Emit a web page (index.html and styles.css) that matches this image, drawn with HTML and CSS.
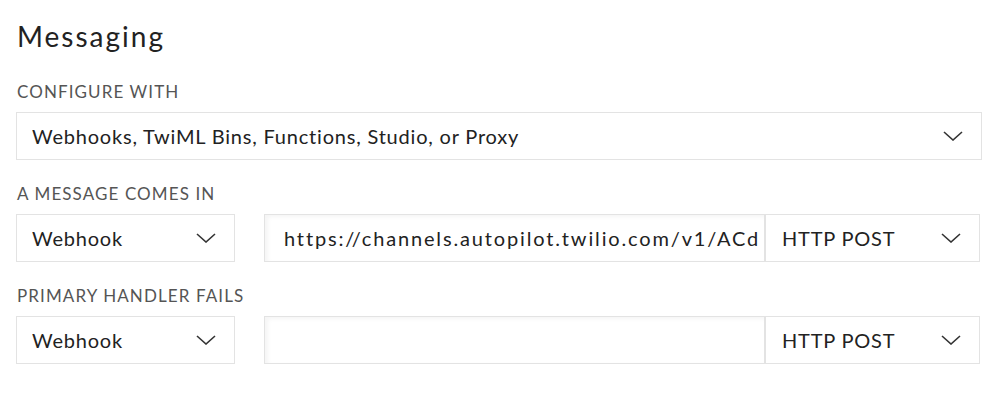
FILE: index.html
```html
<!DOCTYPE html>
<html>
<head>
<meta charset="utf-8">
<link rel="stylesheet" href="styles.css">
</head>
<body>
<div class="page">
  <h1 class="title">Messaging</h1>

  <div class="label">CONFIGURE WITH</div>
  <div class="select full">
    <span class="value">Webhooks, TwiML Bins, Functions, Studio, or Proxy</span>
    <svg class="chev" viewBox="0 0 20 10" width="20" height="10"><path d="M1 1 L10 9 L19 1" fill="none" stroke="#333" stroke-width="1.6"/></svg>
  </div>

  <div class="label">A MESSAGE COMES IN</div>
  <div class="row">
    <div class="select type">
      <span class="value">Webhook</span>
      <svg class="chev" viewBox="0 0 20 10" width="20" height="10"><path d="M1 1 L10 9 L19 1" fill="none" stroke="#333" stroke-width="1.6"/></svg>
    </div>
    <div class="input"><span class="value url">https://channels.autopilot.twilio.com/v1/ACd</span></div>
    <div class="select method">
      <span class="value">HTTP POST</span>
      <svg class="chev" viewBox="0 0 20 10" width="20" height="10"><path d="M1 1 L10 9 L19 1" fill="none" stroke="#333" stroke-width="1.6"/></svg>
    </div>
  </div>

  <div class="label">PRIMARY HANDLER FAILS</div>
  <div class="row">
    <div class="select type">
      <span class="value">Webhook</span>
      <svg class="chev" viewBox="0 0 20 10" width="20" height="10"><path d="M1 1 L10 9 L19 1" fill="none" stroke="#333" stroke-width="1.6"/></svg>
    </div>
    <div class="input"><span class="value"></span></div>
    <div class="select method">
      <span class="value">HTTP POST</span>
      <svg class="chev" viewBox="0 0 20 10" width="20" height="10"><path d="M1 1 L10 9 L19 1" fill="none" stroke="#333" stroke-width="1.6"/></svg>
    </div>
  </div>
</div>
</body>
</html>
```

FILE: styles.css
```css
html, body {
  margin: 0;
  padding: 0;
  background: #ffffff;
}
.page {
  padding: 19px 18px 0 16px;
  font-family: Lato, "Open Sans", sans-serif;
  color: #222;
}
.title {
  margin: 0 0 0 1px;
  font-size: 28px;
  font-weight: 400;
  line-height: 34px;
  letter-spacing: 2px;
  color: #222;
}
.label {
  margin: 24px 0 0 1px;
  font-size: 17px;
  line-height: 20px;
  letter-spacing: 1.1px;
  color: #555;
}
.title + .label {
  margin-top: 29px;
}
.label + .select,
.label + .row {
  margin-top: 10px;
}
.select, .input {
  box-sizing: border-box;
  height: 48px;
  border: 1px solid #e3e3e3;
  display: flex;
  align-items: center;
  font-size: 20px;
  letter-spacing: 0.8px;
  color: #222;
  overflow: hidden;
  white-space: nowrap;
}
.select {
  justify-content: space-between;
  padding: 0 18px 0 15px;
}
.select.full {
  width: 966px;
}
.value {
  overflow: hidden;
}
.value.url {
  letter-spacing: 1.85px;
}
.chev {
  flex: none;
}
.row {
  display: flex;
  width: 964px;
}
.select.type {
  width: 219px;
  margin-right: 29px;
}
.input {
  width: 501px;
  padding: 0 0 0 19px;
  box-shadow: inset 3px 2px 4px rgba(0, 0, 0, 0.045);
}
.select.method {
  flex: 1;
  border-left: 1px solid #e3e3e3;
  padding-left: 16px;
}
```
